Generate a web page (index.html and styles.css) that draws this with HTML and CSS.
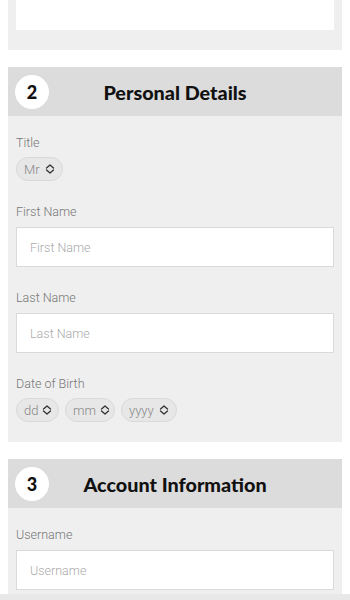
FILE: index.html
```html
<!DOCTYPE html>
<html>
<head>
<meta charset="utf-8">
<link rel="stylesheet" href="styles.css">
</head>
<body>
<div class="page">
  <section class="panel panel-top">
    <div class="white-box"></div>
  </section>

  <section class="panel">
    <header class="panel-head">
      <div class="num">2</div>
      <h2 class="head-title">Personal Details</h2>
    </header>
    <div class="panel-body">
      <div class="field">
        <div class="label">Title</div>
        <div class="pills">
          <div class="pill w-mr"><span>Mr</span><svg class="chev" viewBox="0 0 10 10"><path d="M1.5 4 L5 1 L8.5 4 M1.5 6 L5 9 L8.5 6"/></svg></div>
        </div>
      </div>
      <div class="field">
        <div class="label">First Name</div>
        <div class="input">First Name</div>
      </div>
      <div class="field">
        <div class="label">Last Name</div>
        <div class="input">Last Name</div>
      </div>
      <div class="field">
        <div class="label">Date of Birth</div>
        <div class="pills">
          <div class="pill w-dd"><span>dd</span><svg class="chev" viewBox="0 0 10 10"><path d="M1.5 4 L5 1 L8.5 4 M1.5 6 L5 9 L8.5 6"/></svg></div>
          <div class="pill w-mm"><span>mm</span><svg class="chev" viewBox="0 0 10 10"><path d="M1.5 4 L5 1 L8.5 4 M1.5 6 L5 9 L8.5 6"/></svg></div>
          <div class="pill w-yyyy"><span>yyyy</span><svg class="chev" viewBox="0 0 10 10"><path d="M1.5 4 L5 1 L8.5 4 M1.5 6 L5 9 L8.5 6"/></svg></div>
        </div>
      </div>
    </div>
  </section>

  <section class="panel">
    <header class="panel-head">
      <div class="num">3</div>
      <h2 class="head-title">Account Information</h2>
    </header>
    <div class="panel-body">
      <div class="field">
        <div class="label">Username</div>
        <div class="input">Username</div>
      </div>
    </div>
  </section>
</div>
<div class="footer-bar"></div>
</body>
</html>
```
FILE: styles.css
```css
html, body {
  margin: 0;
  padding: 0;
  background: #ffffff;
}
body {
  font-family: Roboto, "Open Sans", sans-serif;
  color: #777;
}
.page {
  padding: 0 8px;
}
.panel {
  background: #efefef;
  margin-bottom: 17px;
}
.panel-top {
  padding: 0 8px 20px;
}
.white-box {
  height: 30px;
  background: #fff;
}
.panel-head {
  display: grid;
  grid-template-columns: 1fr auto 1fr;
  align-items: center;
  height: 49px;
  background: #dcdcdc;
}
.num {
  width: 34px;
  height: 34px;
  margin-left: 7px;
  border-radius: 50%;
  background: #fff;
  color: #111;
  font-family: Lato, sans-serif;
  font-weight: 900;
  font-size: 18px;
  display: flex;
  align-items: center;
  justify-content: center;
}
.head-title {
  margin: 0;
  font-family: Lato, sans-serif;
  font-size: 19.8px;
  font-weight: 900;
  color: #111;
  white-space: nowrap;
}
.panel-body {
  padding: 18px 8px 20px;
  display: flex;
  flex-direction: column;
  gap: 22px;
}
.field {
  display: flex;
  flex-direction: column;
  gap: 6px;
}
.label {
  font-size: 12.5px;
  line-height: 18px;
  font-weight: 300;
  color: #777;
}
.input {
  height: 40px;
  box-sizing: border-box;
  background: #fff;
  border: 1px solid #dadada;
  padding-left: 13px;
  display: flex;
  align-items: center;
  font-size: 12.5px;
  font-weight: 300;
  color: #aaa;
}
.pills {
  display: flex;
  gap: 6px;
  margin-top: -1px;
}
.pill {
  height: 24px;
  box-sizing: border-box;
  border: 1px solid #d9d9d9;
  border-radius: 12px;
  background: #e7e7e7;
  display: flex;
  align-items: center;
  justify-content: space-between;
  gap: 4px;
  padding: 0 7px 0 7px;
  font-size: 13px;
  font-weight: 300;
  color: #888;
}
.w-mr { width: 47px; }
.w-dd { width: 43px; }
.w-mm { width: 50px; }
.w-yyyy { width: 56px; }
.chev {
  width: 10px;
  height: 10px;
  flex: none;
  fill: none;
  stroke: #333;
  stroke-width: 1.3;
  stroke-linecap: round;
  stroke-linejoin: round;
}
.footer-bar {
  position: fixed;
  left: 0;
  right: 0;
  bottom: 0;
  height: 6px;
  background: #e8e8e8;
}
```
